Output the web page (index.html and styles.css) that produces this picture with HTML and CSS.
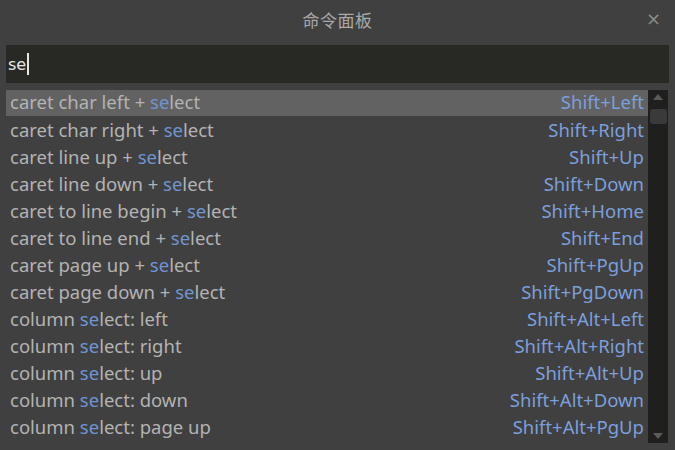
FILE: index.html
```html
<!DOCTYPE html>
<html>
<head>
<meta charset="utf-8">
<link rel="stylesheet" href="styles.css">
</head>
<body>
<div class="panel">
  <div class="titlebar">
    <span class="title">命令面板</span>
    <span class="close">×</span>
  </div>
  <div class="search"><span class="query">se</span><span class="caret"></span></div>
  <div class="listwrap">
    <div class="list">
      <div class="row active"><span class="name">caret char left + <b>se</b>lect</span><span class="key">Shift+Left</span></div>
      <div class="row"><span class="name">caret char right + <b>se</b>lect</span><span class="key">Shift+Right</span></div>
      <div class="row"><span class="name">caret line up + <b>se</b>lect</span><span class="key">Shift+Up</span></div>
      <div class="row"><span class="name">caret line down + <b>se</b>lect</span><span class="key">Shift+Down</span></div>
      <div class="row"><span class="name">caret to line begin + <b>se</b>lect</span><span class="key">Shift+Home</span></div>
      <div class="row"><span class="name">caret to line end + <b>se</b>lect</span><span class="key">Shift+End</span></div>
      <div class="row"><span class="name">caret page up + <b>se</b>lect</span><span class="key">Shift+PgUp</span></div>
      <div class="row"><span class="name">caret page down + <b>se</b>lect</span><span class="key">Shift+PgDown</span></div>
      <div class="row"><span class="name">column <b>se</b>lect: left</span><span class="key">Shift+Alt+Left</span></div>
      <div class="row"><span class="name">column <b>se</b>lect: right</span><span class="key">Shift+Alt+Right</span></div>
      <div class="row"><span class="name">column <b>se</b>lect: up</span><span class="key">Shift+Alt+Up</span></div>
      <div class="row"><span class="name">column <b>se</b>lect: down</span><span class="key">Shift+Alt+Down</span></div>
      <div class="row"><span class="name">column <b>se</b>lect: page up</span><span class="key">Shift+Alt+PgUp</span></div>
    </div>
    <div class="scrollbar">
      <svg class="arrow" width="12" height="8" viewBox="0 0 12 8"><polygon points="6,1 11,7 1,7" fill="#5a5a5a"/></svg>
      <div class="thumb"></div>
      <div class="track"></div>
      <svg class="arrow" width="12" height="8" viewBox="0 0 12 8"><polygon points="1,1 11,1 6,7" fill="#5a5a5a"/></svg>
    </div>
  </div>
</div>
</body>
</html>
```

FILE: styles.css
```css
html, body {
  margin: 0;
  padding: 0;
  background: #404040;
}
.panel {
  width: 675px;
  height: 450px;
  background: #404040;
  font-family: "Noto Sans", "Noto Sans CJK SC", sans-serif;
  display: flex;
  flex-direction: column;
  overflow: hidden;
}
.titlebar {
  height: 45px;
  position: relative;
  display: flex;
  align-items: center;
  justify-content: center;
}
.title {
  color: #a9a9a9;
  font-size: 17px;
  font-family: "Noto Sans CJK SC", sans-serif;
  margin-top: -6px;
  letter-spacing: 0.5px;
}
.close {
  position: absolute;
  right: 14px;
  top: 8px;
  color: #8a8a8a;
  font-size: 18px;
  font-family: "DejaVu Sans", sans-serif;
}
.search {
  margin: 0 6px;
  height: 38px;
  background: #282825;
  display: flex;
  align-items: center;
  padding-left: 2px;
}
.query {
  color: #e6e6e6;
  font-size: 16px;
  font-family: "DejaVu Sans", sans-serif;
}
.caret {
  width: 2px;
  height: 22px;
  background: #e6e6e6;
  margin-left: 1px;
}
.listwrap {
  margin: 7px 7px 0 6px;
  display: flex;
}
.list {
  flex: 1;
  display: flex;
  flex-direction: column;
}
.row {
  height: 27px;
  display: flex;
  align-items: center;
  justify-content: space-between;
  padding: 0 4px;
  font-size: 18.5px;
  line-height: 24px;
  color: #b3b3b3;
  white-space: nowrap;
}
.row span {
  margin-top: -2px;
}
.row.active {
  background: #626262;
  height: 26px;
  margin-bottom: 1px;
}
.name b {
  font-weight: normal;
  color: #6f95d1;
}
.key {
  color: #7c9fdc;
}
.scrollbar {
  width: 20px;
  background: #1f1f1d;
  display: flex;
  flex-direction: column;
  align-items: center;
  padding: 3px 0 3px;
  height: 347px;
}
.arrow {
  display: block;
  flex: none;
}
.thumb {
  width: 17px;
  height: 15px;
  margin-top: 8px;
  border-radius: 3px;
  background: #3a3a3a;
}
.track {
  flex: 1;
}
```
